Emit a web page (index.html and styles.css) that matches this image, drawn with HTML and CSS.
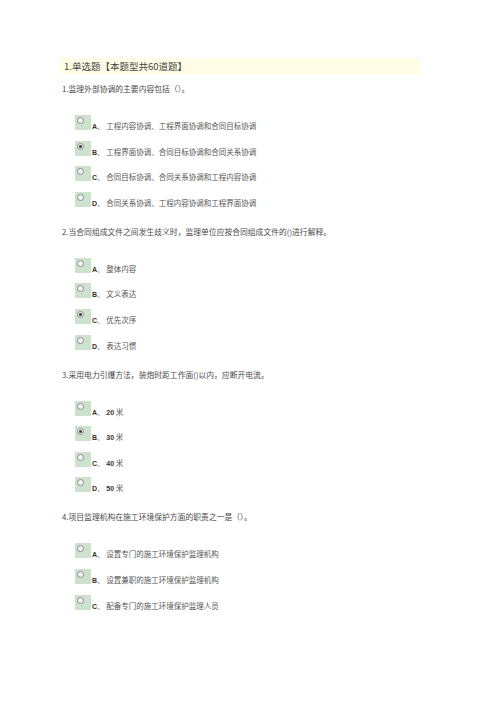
FILE: index.html
```html
<!DOCTYPE html>
<html lang="zh-CN">
<head>
  <meta charset="UTF-8">
  <title>单选题</title>
  <link rel="stylesheet" href="styles.css">
</head>
<body>
  <main class="page">
    <div class="section-title">1.单选题【本题型共60道题】</div>

    <div class="question">
      <p class="q-text">1.监理外部协调的主要内容包括（）。</p>
      <ul class="options">
        <li class="option"><span class="radio"></span><span class="opt-text"><b>A</b>、 工程内容协调、工程界面协调和合同目标协调</span></li>
        <li class="option"><span class="radio checked"></span><span class="opt-text"><b>B</b>、 工程界面协调、合同目标协调和合同关系协调</span></li>
        <li class="option"><span class="radio"></span><span class="opt-text"><b>C</b>、 合同目标协调、合同关系协调和工程内容协调</span></li>
        <li class="option"><span class="radio"></span><span class="opt-text"><b>D</b>、 合同关系协调、工程内容协调和工程界面协调</span></li>
      </ul>
    </div>

    <div class="question">
      <p class="q-text">2.当合同组成文件之间发生歧义时，监理单位应按合同组成文件的()进行解释。</p>
      <ul class="options">
        <li class="option"><span class="radio"></span><span class="opt-text"><b>A</b>、 整体内容</span></li>
        <li class="option"><span class="radio"></span><span class="opt-text"><b>B</b>、 文义表达</span></li>
        <li class="option"><span class="radio checked"></span><span class="opt-text"><b>C</b>、 优先次序</span></li>
        <li class="option"><span class="radio"></span><span class="opt-text"><b>D</b>、 表达习惯</span></li>
      </ul>
    </div>

    <div class="question">
      <p class="q-text">3.采用电力引爆方法，装炮时距工作面()以内，应断开电流。</p>
      <ul class="options">
        <li class="option"><span class="radio"></span><span class="opt-text"><b>A</b>、 <b>20</b> 米</span></li>
        <li class="option"><span class="radio checked"></span><span class="opt-text"><b>B</b>、 <b>30</b> 米</span></li>
        <li class="option"><span class="radio"></span><span class="opt-text"><b>C</b>、 <b>40</b> 米</span></li>
        <li class="option"><span class="radio"></span><span class="opt-text"><b>D</b>、 <b>50</b> 米</span></li>
      </ul>
    </div>

    <div class="question">
      <p class="q-text">4.项目监理机构在施工环境保护方面的职责之一是（）。</p>
      <ul class="options">
        <li class="option"><span class="radio"></span><span class="opt-text"><b>A</b>、 设置专门的施工环境保护监理机构</span></li>
        <li class="option"><span class="radio"></span><span class="opt-text"><b>B</b>、 设置兼职的施工环境保护监理机构</span></li>
        <li class="option"><span class="radio"></span><span class="opt-text"><b>C</b>、 配备专门的施工环境保护监理人员</span></li>
      </ul>
    </div>
  </main>
</body>
</html>
```

FILE: styles.css
```css
body {
  margin: 0;
  background: #fff;
  font-family: "Noto Sans CJK SC", "Liberation Sans", sans-serif;
  color: #555;
}

.page {
  padding: 58px 0 0 60px;
  display: flex;
  flex-direction: column;
  gap: 19px;
}

.section-title {
  width: 356px;
  height: 16px;
  line-height: 16px;
  padding-left: 4px;
  margin-bottom: -10px;
  background: #fffde6;
  font-size: 9.5px;
  color: #444;
}

.question {
  padding-left: 2px;
}

.q-text {
  margin: 0;
  height: 12px;
  line-height: 12px;
  font-size: 7.8px;
  color: #4a4a4a;
}

.options {
  list-style: none;
  margin: 20px 0 0;
  padding: 0 0 0 13px;
  display: flex;
  flex-direction: column;
  gap: 10.6px;
}

.option {
  display: flex;
  align-items: flex-end;
  height: 15px;
}

.radio {
  position: relative;
  width: 16px;
  height: 15px;
  background: #cde2cd;
  flex-shrink: 0;
}

.radio::before {
  content: "";
  position: absolute;
  left: 2px;
  top: 2px;
  width: 5px;
  height: 5px;
  border: 1px solid #8a8a8a;
  border-radius: 50%;
  background: #f4f4f4;
}

.radio.checked::after {
  content: "";
  position: absolute;
  left: 4px;
  top: 4px;
  width: 3px;
  height: 3px;
  border-radius: 50%;
  background: #333;
}

.opt-text {
  margin-left: 1px;
  margin-bottom: -2px;
  line-height: 10px;
  font-size: 7.5px;
  color: #555;
  white-space: nowrap;
}

.opt-text b {
  font-family: "Liberation Sans", sans-serif;
  font-size: 7px;
  color: #333;
}
```
